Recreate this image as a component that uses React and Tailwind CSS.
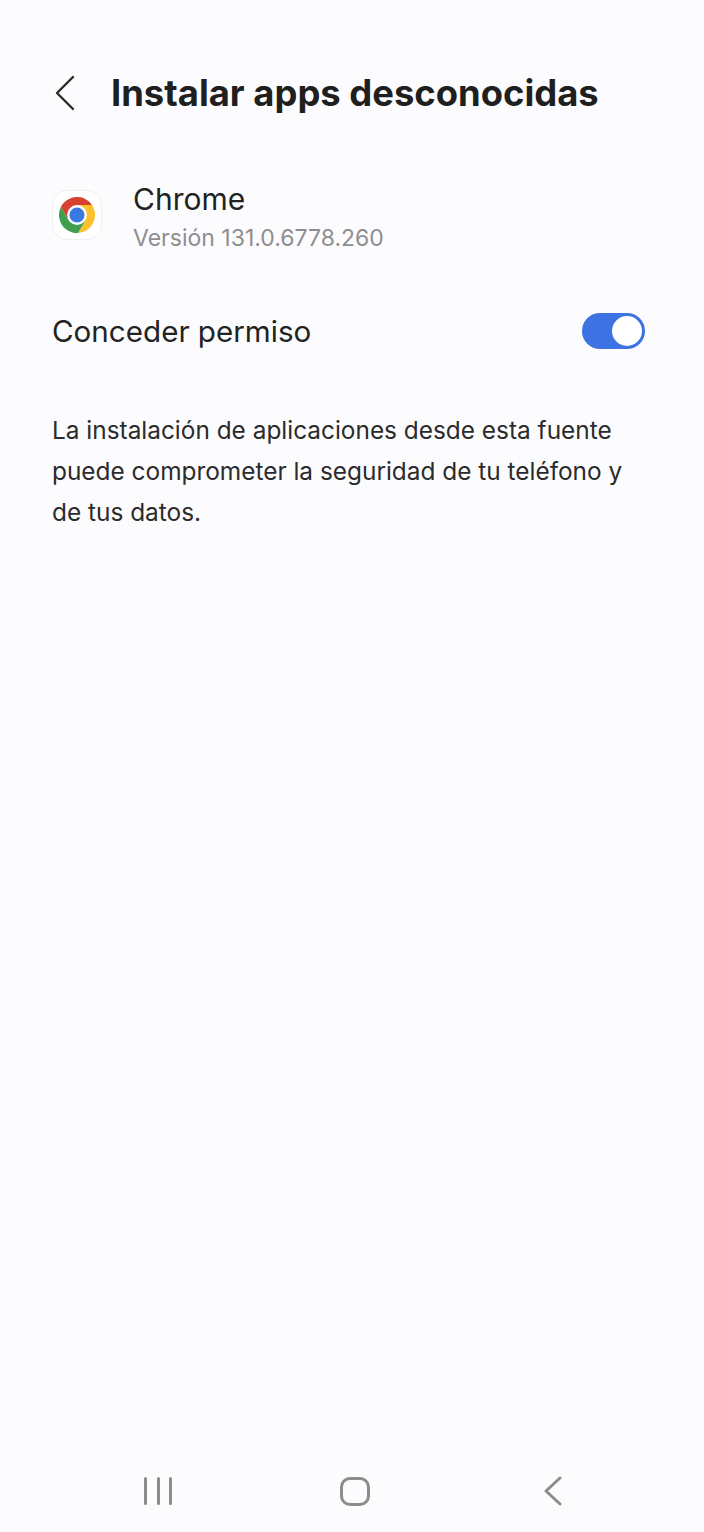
import React from "react";

const ChromeIcon = () => (
  <svg width="36" height="36" viewBox="4 4 40 40">
    <path d="M24 13 L40.7 13 A20 20 0 0 0 6.12 15.04 L14.47 29.5 L24 24 Z" fill="#d8402f" />
    <path d="M24 13 L40.7 13 A20 20 0 0 1 25.18 43.96 L33.53 29.5 L24 24 Z" fill="#fbc02d" />
    <path d="M33.53 29.5 L25.18 43.96 A20 20 0 0 1 6.12 15.04 L14.47 29.5 L24 24 Z" fill="#3f9f4f" />
    <circle cx="24" cy="24" r="11" fill="#ffffff" />
    <circle cx="24" cy="24" r="8.4" fill="#3b78e0" />
  </svg>
);

const App = () => {
  return (
    <div className="h-[1532px] w-[704px] flex flex-col bg-[#fcfcfe] font-['Inter','Noto_Sans',sans-serif] text-[#1c1c1e]">
      {/* header */}
      <div className="flex items-center pl-[54px] pt-[71px]">
        <svg width="22" height="36" viewBox="0 0 22 36" fill="none" stroke="#2a2a2a" strokeWidth="2.4" strokeLinecap="round" strokeLinejoin="round">
          <path d="M19 2 L3 18 L19 34" />
        </svg>
        <h1 className="ml-[35px] text-[36.4px] leading-[44px] font-bold text-[#1f1f1f]">Instalar apps desconocidas</h1>
      </div>

      {/* app */}
      <div className="flex items-start pl-[52px] pt-[65px]">
        <div className="mt-[10px] w-[50px] h-[50px] rounded-[15px] bg-white border border-[#efeff2] flex items-center justify-center">
          <ChromeIcon />
        </div>
        <div className="ml-[31px]">
          <div className="text-[30px] leading-[38px] text-[#222222]">Chrome</div>
          <div className="mt-[1px] text-[23px] leading-[38px] text-[#8e8e90]">Versión 131.0.6778.260</div>
        </div>
      </div>

      {/* toggle */}
      <div className="flex items-center justify-between pl-[52px] pr-[59px] pt-[54px]">
        <span className="text-[29.6px] leading-[40px] text-[#222222]">Conceder permiso</span>
        <div className="w-[63px] h-[36px] rounded-full bg-[#3c72e2] flex items-center justify-end pr-[3px]">
          <div className="w-[30px] h-[30px] rounded-full bg-white" />
        </div>
      </div>

      <p className="mt-[59px] mx-[52px] w-[590px] text-[24.4px] leading-[41px] text-[#2b2b2b]">
        La instalación de aplicaciones desde esta fuente puede comprometer la seguridad de tu teléfono y de tus datos.
      </p>

      {/* nav bar */}
      <div className="mt-auto mb-[26px] flex items-center pl-[144px]">
        <div className="flex gap-[9.5px] h-[28px]">
          <div className="w-[3px] h-full rounded-full bg-[#8c8c8c]" />
          <div className="w-[3px] h-full rounded-full bg-[#8c8c8c]" />
          <div className="w-[3px] h-full rounded-full bg-[#8c8c8c]" />
        </div>
        <div className="ml-[168px] w-[30px] h-[29px] rounded-[10px] border-[3px] border-[#8c8c8c]" />
        <svg className="ml-[174px]" width="18" height="30" viewBox="0 0 18 30" fill="none" stroke="#8c8c8c" strokeWidth="3" strokeLinecap="round" strokeLinejoin="round">
          <path d="M16 2 L2 15 L16 28" />
        </svg>
      </div>
    </div>
  );
};

export default App;
